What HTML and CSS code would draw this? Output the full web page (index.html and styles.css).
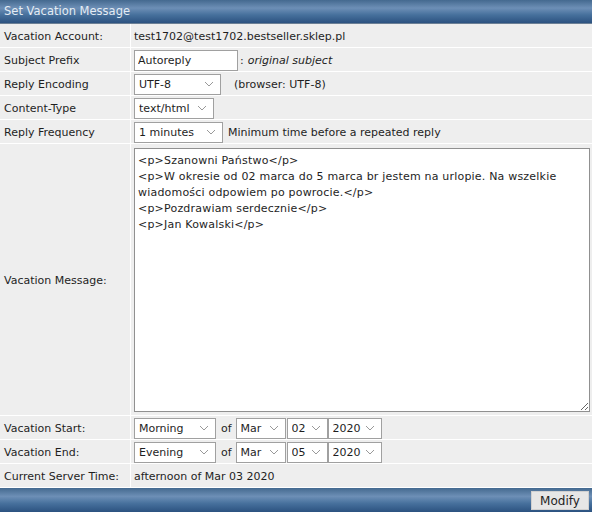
FILE: index.html
```html
<!DOCTYPE html>
<html>
<head>
<meta charset="utf-8">
<link rel="stylesheet" href="styles.css">
</head>
<body>
<div class="panel">
  <div class="bar head">Set Vacation Message</div>
  <div class="row">
    <div class="lbl">Vacation Account:</div>
    <div class="val">test1702@test1702.bestseller.sklep.pl</div>
  </div>
  <div class="row">
    <div class="lbl">Subject Prefix</div>
    <div class="val"><input class="txt" type="text" value="Autoreply"><span class="sep">:</span><em>original subject</em></div>
  </div>
  <div class="row">
    <div class="lbl">Reply Encoding</div>
    <div class="val"><select class="sel w87"><option>UTF-8</option></select><span class="note">(browser: UTF-8)</span></div>
  </div>
  <div class="row">
    <div class="lbl">Content-Type</div>
    <div class="val"><select class="sel w80"><option>text/html</option></select></div>
  </div>
  <div class="row">
    <div class="lbl">Reply Frequency</div>
    <div class="val"><select class="sel w89"><option>1 minutes</option></select><span class="note2">Minimum time before a repeated reply</span></div>
  </div>
  <div class="row tall">
    <div class="lbl">Vacation Message:</div>
    <div class="val"><textarea class="msg">&lt;p&gt;Szanowni Państwo&lt;/p&gt;
&lt;p&gt;W okresie od 02 marca do 5 marca br jestem na urlopie. Na wszelkie wiadomości odpowiem po powrocie.&lt;/p&gt;
&lt;p&gt;Pozdrawiam serdecznie&lt;/p&gt;
&lt;p&gt;Jan Kowalski&lt;/p&gt;</textarea></div>
  </div>
  <div class="row">
    <div class="lbl">Vacation Start:</div>
    <div class="val"><select class="sel w82"><option>Morning</option></select><span class="of">of</span><select class="sel w50"><option>Mar</option></select><select class="sel w41"><option>02</option></select><select class="sel w54"><option>2020</option></select></div>
  </div>
  <div class="row">
    <div class="lbl">Vacation End:</div>
    <div class="val"><select class="sel w82"><option>Evening</option></select><span class="of">of</span><select class="sel w50"><option>Mar</option></select><select class="sel w41"><option>05</option></select><select class="sel w54"><option>2020</option></select></div>
  </div>
  <div class="row">
    <div class="lbl">Current Server Time:</div>
    <div class="val">afternoon of Mar 03 2020</div>
  </div>
  <div class="bar foot"><button class="btn">Modify</button></div>
</div>
</body>
</html>
```

FILE: styles.css
```css
* { box-sizing: border-box; }
html, body { margin: 0; padding: 0; }
body {
  font-family: "DejaVu Sans", Verdana, sans-serif;
  font-size: 11px;
  color: #1e1e1e;
  background: #ffffff;
  width: 592px;
}
.panel { width: 592px; }
.bar {
  height: 24px;
  background: linear-gradient(#44698f 0%, #6d8fb6 35%, #46709c 65%, #2c5280 100%);
}
.head {
  color: #e4ecf4;
  font-size: 11.5px;
  padding-left: 4px;
  line-height: 23px;
  border-bottom: 1px solid #6b7f95;
}
.row {
  display: flex;
  height: 24px;
  background: #eeeeee;
  border-bottom: 1px solid #ffffff;
}
.row.tall { height: 272px; }
.lbl {
  width: 131px;
  flex: none;
  padding-left: 4px;
  padding-top: 1px;
  border-right: 1px solid #ffffff;
  display: flex;
  align-items: center;
}
.val {
  flex: 1;
  padding-left: 3px;
  padding-top: 1px;
  display: flex;
  align-items: center;
  white-space: nowrap;
}
.tall .val { align-items: flex-start; padding-top: 4px; padding-right: 2px; }
.txt {
  font: inherit;
  width: 104px;
  height: 21px;
  border: 1px solid #a0a0a0;
  padding: 0 3px;
  color: #1e1e1e;
  background: #fff;
  margin: 0;
}
.sep { margin-left: 2px; margin-right: 4px; }
.sel {
  font: inherit;
  color: #1e1e1e;
  height: 21px;
  border: 1px solid #a0a0a0;
  background: #fff url("data:image/svg+xml,%3Csvg xmlns='http://www.w3.org/2000/svg' width='10' height='6'%3E%3Cpath d='M1 1l4 4 4-4' fill='none' stroke='%23999' stroke-width='1'/%3E%3C/svg%3E") no-repeat right 6px center;
  -webkit-appearance: none;
  appearance: none;
  padding: 0 0 0 4px;
  margin: 0;
  border-radius: 0;
}
.w87 { width: 87px; }
.w80 { width: 80px; }
.w89 { width: 89px; }
.w82 { width: 82px; }
.w50 { width: 50px; margin-right: 1px; }
.w41 { width: 41px; margin-right: 0; }
.w54 { width: 54px; }
.note { margin-left: 13px; }
.note2 { margin-left: 5px; }
.of { margin: 0 4px 0 5px; }
.msg {
  font: inherit;
  line-height: 16px;
  letter-spacing: 0.2px;
  color: #1e1e1e;
  width: 456px;
  height: 264px;
  border: 1px solid #909090;
  padding: 4px 3px 3px 3px;
  margin: 0;
  resize: both;
  background: #fff;
}
.foot {
  display: flex;
  justify-content: flex-end;
  align-items: center;
  padding-right: 3px;
}
.btn {
  font: inherit;
  font-size: 12px;
  color: #1e1e1e;
  background: #e6e6e6;
  border: 1px solid #d0d0d0;
  width: 58px;
  height: 19px;
  padding: 0;
  margin-top: 1px;
  border-radius: 0;
}
```
